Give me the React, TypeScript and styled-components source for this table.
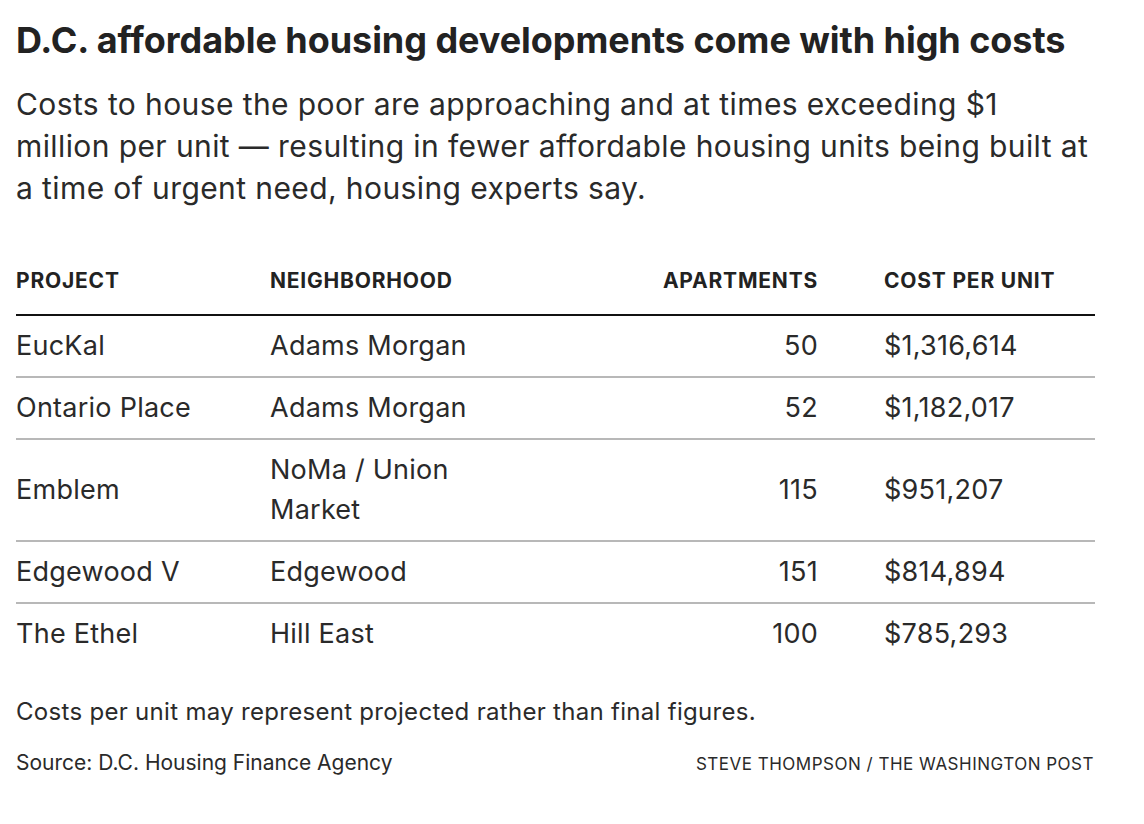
import React from "react";
import styled, { createGlobalStyle } from "styled-components";

type Row = {
    project: string;
    neighborhood: string;
    apartments: number;
    cost: string;
};

const rows: Row[] = [
    { project: "EucKal", neighborhood: "Adams Morgan", apartments: 50, cost: "$1,316,614" },
    { project: "Ontario Place", neighborhood: "Adams Morgan", apartments: 52, cost: "$1,182,017" },
    { project: "Emblem", neighborhood: "NoMa / Union Market", apartments: 115, cost: "$951,207" },
    { project: "Edgewood V", neighborhood: "Edgewood", apartments: 151, cost: "$814,894" },
    { project: "The Ethel", neighborhood: "Hill East", apartments: 100, cost: "$785,293" },
];

const GlobalStyle = createGlobalStyle`
    body {
        margin: 0;
        background: #fff;
        font-family: Inter, "Liberation Sans", Arial, sans-serif;
        color: #2a2a2a;
    }
`;

export default function App() {
    return (
        <>
            <GlobalStyle />
            <Graphic>
                <Title>D.C. affordable housing developments come with high costs</Title>
                {/* line breaks kept as in the published graphic */}
                <Dek>
                    Costs to house the poor are approaching and at times exceeding $1
                    <br />
                    million per unit — resulting in fewer affordable housing units being built at
                    <br />
                    a time of urgent need, housing experts say.
                </Dek>

                <Table>
                    <HeadRow>
                        <HeadCell>Project</HeadCell>
                        <HeadCell>Neighborhood</HeadCell>
                        <HeadCell $right>Apartments</HeadCell>
                        <HeadCell $last>Cost per unit</HeadCell>
                    </HeadRow>
                    {rows.map((r, i) => (
                        <BodyRow key={r.project} $lastRow={i === rows.length - 1}>
                            <Cell>{r.project}</Cell>
                            <Cell>{r.neighborhood}</Cell>
                            <Cell $right>{r.apartments}</Cell>
                            <Cell $last>{r.cost}</Cell>
                        </BodyRow>
                    ))}
                </Table>

                <Note>Costs per unit may represent projected rather than final figures.</Note>
                <Footer>
                    <Source>Source: D.C. Housing Finance Agency</Source>
                    <Credit>Steve Thompson / The Washington Post</Credit>
                </Footer>
            </Graphic>
        </>
    );
}

const Graphic = styled.div`
    width: 1079px;
    padding: 20px 0 0 16px;
`;

const Title = styled.h1`
    margin: 0;
    font-size: 36px;
    line-height: 40px;
    font-weight: 700;
    letter-spacing: -0.05px;
    color: #222;
`;

const Dek = styled.p`
    margin: 23px 0 0;
    font-size: 30px;
    line-height: 42px;
    font-weight: 400;
    letter-spacing: 0.4px;
    white-space: nowrap;
    color: #2a2a2a;
`;

const Table = styled.div`
    margin-top: 59px;
`;

const Columns = styled.div`
    display: grid;
    grid-template-columns: 254px 200px 348px 1fr;
`;

const HeadRow = styled(Columns)`
    border-bottom: 2px solid #111;
`;

const BodyRow = styled(Columns)<{ $lastRow?: boolean }>`
    border-bottom: 2px solid ${(p) => (p.$lastRow ? "transparent" : "#b8b8b8")};
    align-items: center;
`;

const HeadCell = styled.div<{ $right?: boolean; $last?: boolean }>`
    padding: 0 0 20px ${(p) => (p.$last ? "66px" : "0")};
    font-size: 21px;
    line-height: 26px;
    font-weight: 700;
    letter-spacing: 0.8px;
    text-transform: uppercase;
    text-align: ${(p) => (p.$right ? "right" : "left")};
    color: #222;
`;

const Cell = styled.div<{ $right?: boolean; $last?: boolean }>`
    padding: 10px 0 10px ${(p) => (p.$last ? "66px" : "0")};
    font-size: 27px;
    line-height: 40px;
    letter-spacing: 0.25px;
    text-align: ${(p) => (p.$right ? "right" : "left")};
`;

const Note = styled.p`
    margin: 30px 0 0;
    font-size: 24px;
    line-height: 31px;
    letter-spacing: 0.3px;
`;

const Footer = styled.div`
    display: flex;
    justify-content: space-between;
    align-items: baseline;
    margin-top: 22px;
    padding-right: 1px;
`;

const Source = styled.span`
    font-size: 21px;
    line-height: 28px;
`;

const Credit = styled.span`
    font-size: 17px;
    line-height: 28px;
    letter-spacing: 0.5px;
    text-transform: uppercase;
`;
